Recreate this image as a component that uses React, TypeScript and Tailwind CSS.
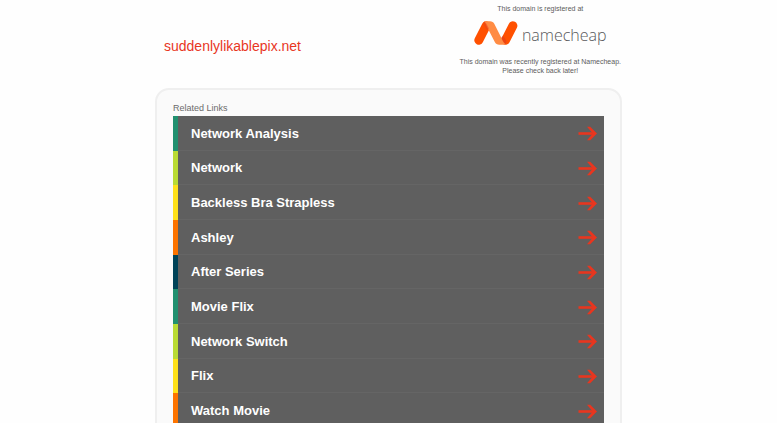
const links = [
  { label: "Network Analysis", accent: "bg-[#21906f]" },
  { label: "Network", accent: "bg-[#b9db34]" },
  { label: "Backless Bra Strapless", accent: "bg-[#ffe11a]" },
  { label: "Ashley", accent: "bg-[#fd7400]" },
  { label: "After Series", accent: "bg-[#004358]" },
  { label: "Movie Flix", accent: "bg-[#21906f]" },
  { label: "Network Switch", accent: "bg-[#b9db34]" },
  { label: "Flix", accent: "bg-[#ffe11a]" },
  { label: "Watch Movie", accent: "bg-[#fd7400]" },
];

function NamecheapMark() {
  return (
    <svg width="44" height="24" viewBox="0 0 44 24" fill="none" className="shrink-0" aria-hidden="true">
      <path d="M4.800 19.200 12.200 4.800" stroke="#ff5000" strokeWidth="9" strokeLinecap="round" />
      <path d="M31.500 19.200 38.900 4.800" stroke="#ff5000" strokeWidth="9" strokeLinecap="round" />
      <path
        d="M10 .5C11 .3 11.600.2 12.500.2h3.500c2 0 3.500.9 4.400 2.700l7.800 15.500c.8 1.700 2 3.700 3.500 4.900-1 .5-2 .5-3.200.5h-3.300c-2 0-3.500-1-4.400-2.800L12.800 5.500C12 3.500 11.300 1.800 10 .5Z"
        fill="#ff8c44"
      />
      <path d="M10 .5c1.700.9 2.600 2.500 3.400 4l1.600 3-2 1.500L9.500 3.500Z" fill="#e5421c" opacity=".5" />
      <path d="M31.700 23.300c-1.600-1-2.600-2.800-3.400-4.300l-1.100-2.300 1.800-2.200 3.500 5.500Z" fill="#d93a24" opacity=".5" />
    </svg>
  );
}

function Arrow() {
  return (
    <svg width="19" height="15" viewBox="0 0 19 15" fill="none" className="shrink-0" aria-hidden="true">
      <path d="M.5 7.500H17" stroke="#e8361f" strokeWidth="2.600" />
      <path d="M9 .8h3.200L19 7.500 12.200 14.200H9L14.800 7.500Z" fill="#e8361f" />
    </svg>
  );
}

export default function App() {
  return (
    <div className="h-screen overflow-hidden bg-[#fefefe] font-['Liberation_Sans',Arial,sans-serif]">
      <header className="mx-auto flex w-full max-w-[477px] items-start justify-between pt-1 pr-1.5 pl-3.5">
        <h1 className="pt-8 text-[14px] leading-5 text-[#e8361f]">
          suddenlylikablepix.net
        </h1>
        <div className="text-center text-[7px] leading-[9px] text-[#5c5c5c]">
          <p>This domain is registered at</p>
          <a
            href="#"
            aria-label="Namecheap"
            className="mt-1.5 flex items-center justify-center gap-1 font-['Open_Sans',sans-serif] text-[16px] leading-6 font-light text-[#58595b]"
          >
            <NamecheapMark />
            <span className="pt-1">namecheap</span>
          </a>
          <p className="mt-2.5">
            This domain was recently registered at Namecheap.
            <br />
            Please check back later!
          </p>
        </div>
      </header>

      <main className="mx-auto mt-[13px] w-full max-w-[467px] rounded-t-[14px] border-2 border-[#efefef] bg-[#fafafa] px-4 pt-3">
        <h2 className="text-[9px] leading-3 text-[#6b6b6b]">Related Links</h2>
        <ul className="mt-0.5 grid min-h-[312px] auto-rows-fr">
          {links.map((link) => (
            <li key={link.label} className="flex bg-[#5f5f5f]">
              <span className={`w-[5px] ${link.accent}`} />
              <a
                href="#"
                className="flex flex-1 items-center justify-between border-b border-[#656565] pt-0.5 pr-[7px] pl-[13px] text-[13px] leading-5 font-bold text-white"
              >
                {link.label}
                <Arrow />
              </a>
            </li>
          ))}
        </ul>
      </main>
    </div>
  );
}
